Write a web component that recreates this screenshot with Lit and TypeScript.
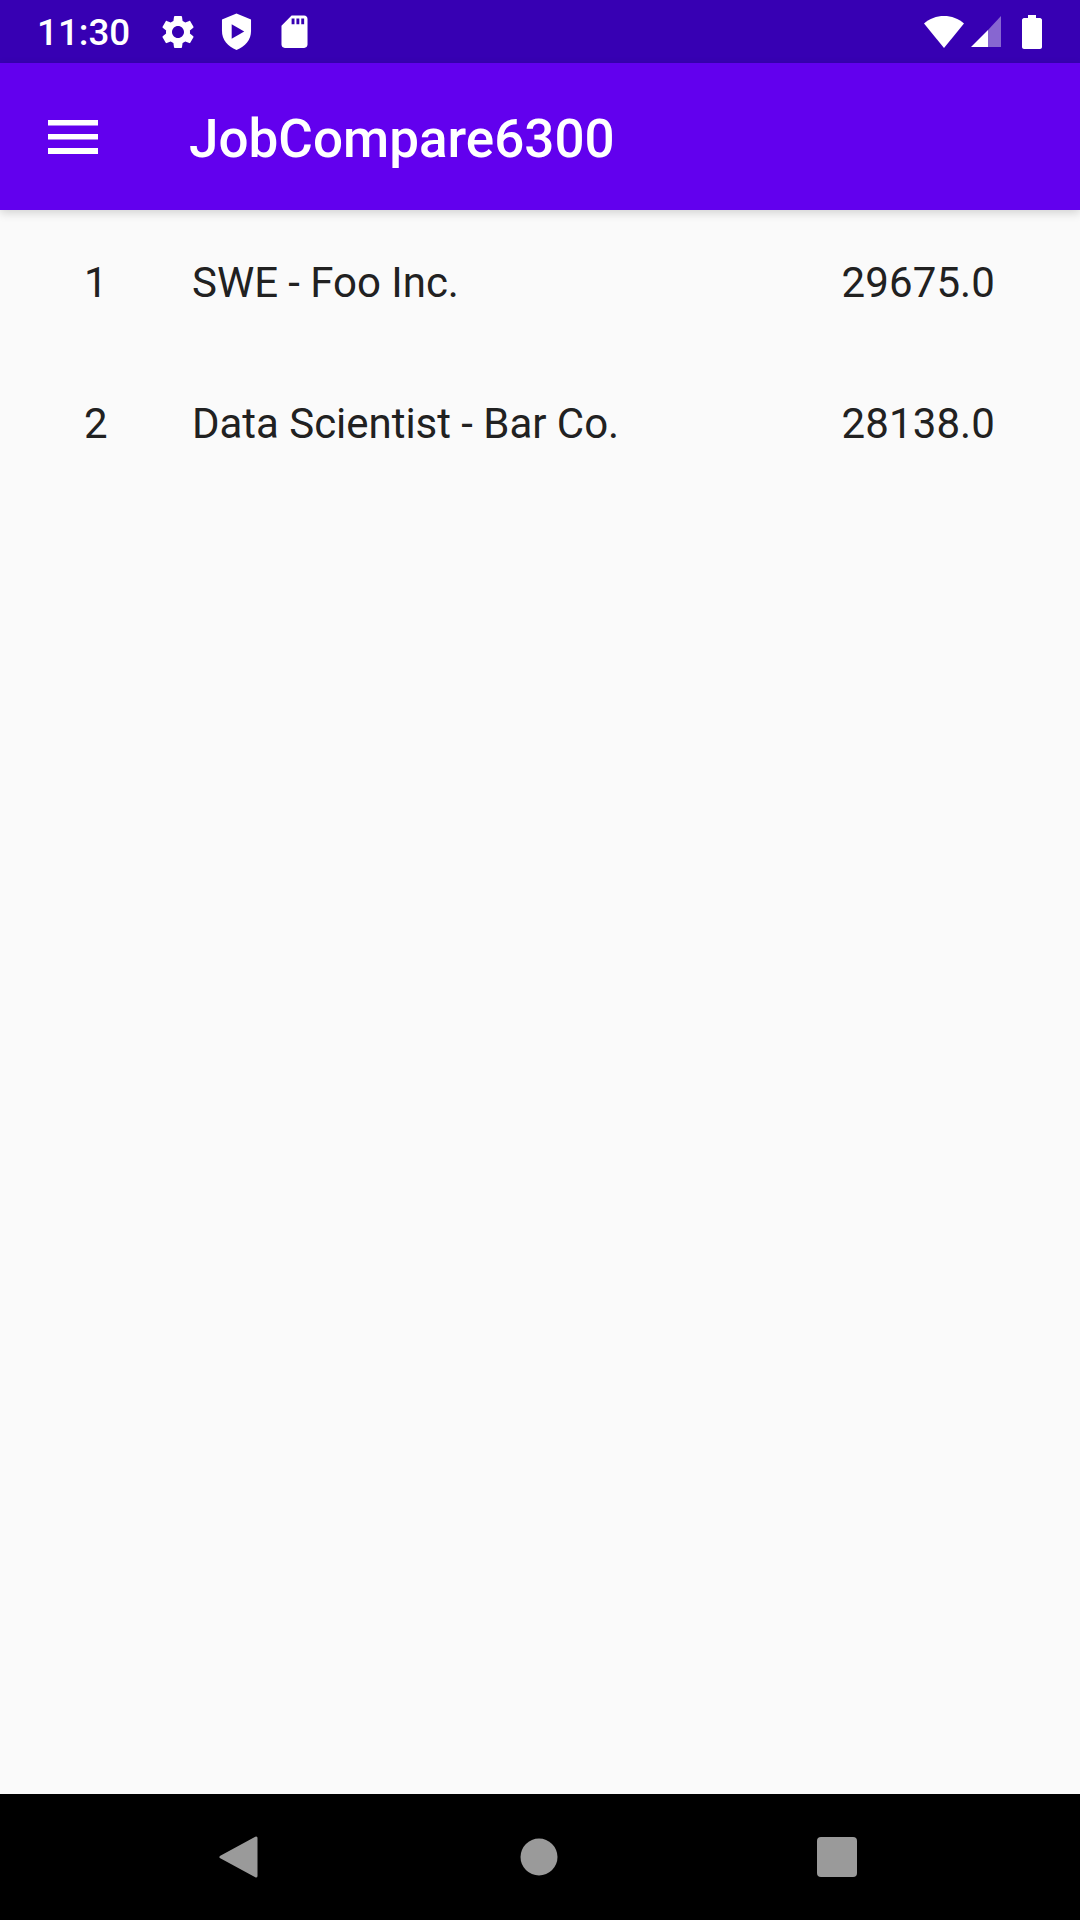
import { LitElement, html, css, svg } from 'lit';
import { customElement } from 'lit/decorators.js';

const jobs = [
  { rank: 1, title: 'SWE - Foo Inc.', score: '29675.0' },
  { rank: 2, title: 'Data Scientist - Bar Co.', score: '28138.0' },
];

const gear = svg`<path fill="#fff" d="M19.14 12.94c.04-.3.06-.61.06-.94 0-.32-.02-.64-.07-.94l2.03-1.58c.18-.14.23-.41.12-.61l-1.92-3.32c-.12-.22-.37-.29-.59-.22l-2.39.96c-.5-.38-1.03-.7-1.62-.94l-.36-2.54c-.04-.24-.24-.41-.48-.41h-3.84c-.24 0-.43.17-.47.41l-.36 2.54c-.59.24-1.13.57-1.62.94l-2.39-.96c-.22-.08-.47 0-.59.22L2.74 8.87c-.12.21-.08.47.12.61l2.03 1.58c-.05.3-.09.63-.09.94s.02.64.07.94l-2.03 1.58c-.18.14-.23.41-.12.61l1.92 3.32c.12.22.37.29.59.22l2.39-.96c.5.38 1.03.7 1.62.94l.36 2.54c.05.24.24.41.48.41h3.84c.24 0 .44-.17.47-.41l.36-2.54c.59-.24 1.13-.56 1.62-.94l2.39.96c.22.08.47 0 .59-.22l1.92-3.32c.12-.22.07-.47-.12-.61l-2.01-1.58zM12 15.6c-1.98 0-3.6-1.62-3.6-3.6s1.62-3.6 3.6-3.6 3.6 1.62 3.6 3.6-1.62 3.6-3.6 3.6z"/>`;

@customElement('app-root')
export class AppRoot extends LitElement {
  static styles = css`
    :host {
      display: flex;
      flex-direction: column;
      height: 1920px;
      background: #fafafa;
      font-family: Roboto, "Noto Sans", sans-serif;
      color: #212121;
    }
    .status {
      height: 63px;
      background: #3700b3;
      display: flex;
      align-items: center;
      padding: 0 38px 0 37px;
      color: #fff;
      flex: none;
    }
    .time {
      font-size: 36.75px;
      font-weight: 500;
      width: 121px;
      padding-top: 2px;
    }
    .status svg {
      display: block;
      flex: none;
    }
    .left-icons {
      display: flex;
      align-items: center;
      gap: 23px;
      flex: 1;
    }
    .left-icons .sd {
      margin-left: 6px;
    }
    .right-icons {
      display: flex;
      align-items: center;
      gap: 5px;
    }
    .battery {
      margin-left: 15px;
    }
    .toolbar {
      height: 147px;
      background: #6200ee;
      color: #fff;
      display: flex;
      align-items: center;
      flex: none;
      padding-left: 48px;
      gap: 91px;
      box-shadow: 0 3px 9px rgba(0, 0, 0, 0.16);
      position: relative;
    }
    .title {
      font-size: 53px;
      font-weight: 500;
      padding-top: 4px;
    }
    .list {
      flex: 1;
      padding-top: 2px;
    }
    .row {
      height: 141px;
      display: flex;
      align-items: center;
      padding: 0 85px 0 84px;
      font-size: 42px;
      letter-spacing: -0.03px;
    }
    .rank {
      width: 108px;
    }
    .name {
      flex: 1;
    }
    .score {
      letter-spacing: 0.1px;
    }
    .nav {
      height: 126px;
      background: #000;
      flex: none;
      display: flex;
      align-items: center;
      padding-left: 219px;
      gap: 259px;
    }
    .nav svg {
      display: block;
    }
    .nav .circle {
      margin-left: 3px;
    }
  `;

  render() {
    return html`
      <div class="status">
        <span class="time">11:30</span>
        <div class="left-icons">
          <svg width="40" height="40" viewBox="0 0 24 24">${gear}</svg>
          <svg width="31" height="38" viewBox="0 0 32 38">
            <path fill="#fff" d="M16 0 L31 6 V18 C31 27 25 34 16 37.5 C7 34 1 27 1 18 V6 Z" />
            <path fill="#3700b3" d="M11 11 L24 18.5 L11 26 Z" />
          </svg>
          <svg class="sd" width="27" height="34" viewBox="0 0 28 34">
            <path fill="#fff" fill-rule="evenodd" d="M11 0 H24 C26 0 27.5 1.5 27.5 3.5 V30 C27.5 32 26 33.5 24 33.5 H4 C2 33.5 .5 32 .5 30 V10.5 Z M11 3 V9 H14 V3 Z M16 3 V9 H19 V3 Z M21 3 V9 H24 V3 Z" />
          </svg>
        </div>
        <div class="right-icons">
          <svg width="42" height="34" viewBox="0 0 42 34">
            <path fill="#fff" d="M21 33 L1 8.5 C6.5 3.5 13.5 1 21 1 C28.5 1 35.5 3.5 41 8.5 Z" />
          </svg>
          <svg width="32" height="34" viewBox="0 0 32 34">
            <path fill="#fff" opacity="0.4" d="M18 15 L31 1 V32 H18 Z" />
            <path fill="#fff" d="M18 15 V32 H1 Z" />
          </svg>
          <svg class="battery" width="20" height="34" viewBox="0 0 20 34">
            <path fill="#fff" d="M6 0 H14 V3 H18 C19 3 20 4 20 5 V32 C20 33 19 34 18 34 H2 C1 34 0 33 0 32 V5 C0 4 1 3 2 3 H6 Z" />
          </svg>
        </div>
      </div>

      <header class="toolbar">
        <svg width="50" height="34" viewBox="0 0 50 34">
          <path fill="#fff" d="M0 0 H50 V5.5 H0 Z M0 14 H50 V19.5 H0 Z M0 28 H50 V34 H0 Z" />
        </svg>
        <span class="title">JobCompare6300</span>
      </header>

      <main class="list">
        ${jobs.map(
          (j) => html`
            <div class="row">
              <span class="rank">${j.rank}</span>
              <span class="name">${j.title}</span>
              <span class="score">${j.score}</span>
            </div>
          `
        )}
      </main>

      <nav class="nav">
        <svg width="39" height="42" viewBox="0 0 39 42">
          <path fill="#9a9a9a" stroke="#9a9a9a" stroke-width="3" stroke-linejoin="round" d="M37 2 V40 L2 21 Z" />
        </svg>
        <svg class="circle" width="38" height="38" viewBox="0 0 38 38">
          <circle fill="#9a9a9a" cx="19" cy="19" r="18.5" />
        </svg>
        <svg width="40" height="40" viewBox="0 0 40 40">
          <rect fill="#9a9a9a" width="40" height="40" rx="4" />
        </svg>
      </nav>
    `;
  }
}
